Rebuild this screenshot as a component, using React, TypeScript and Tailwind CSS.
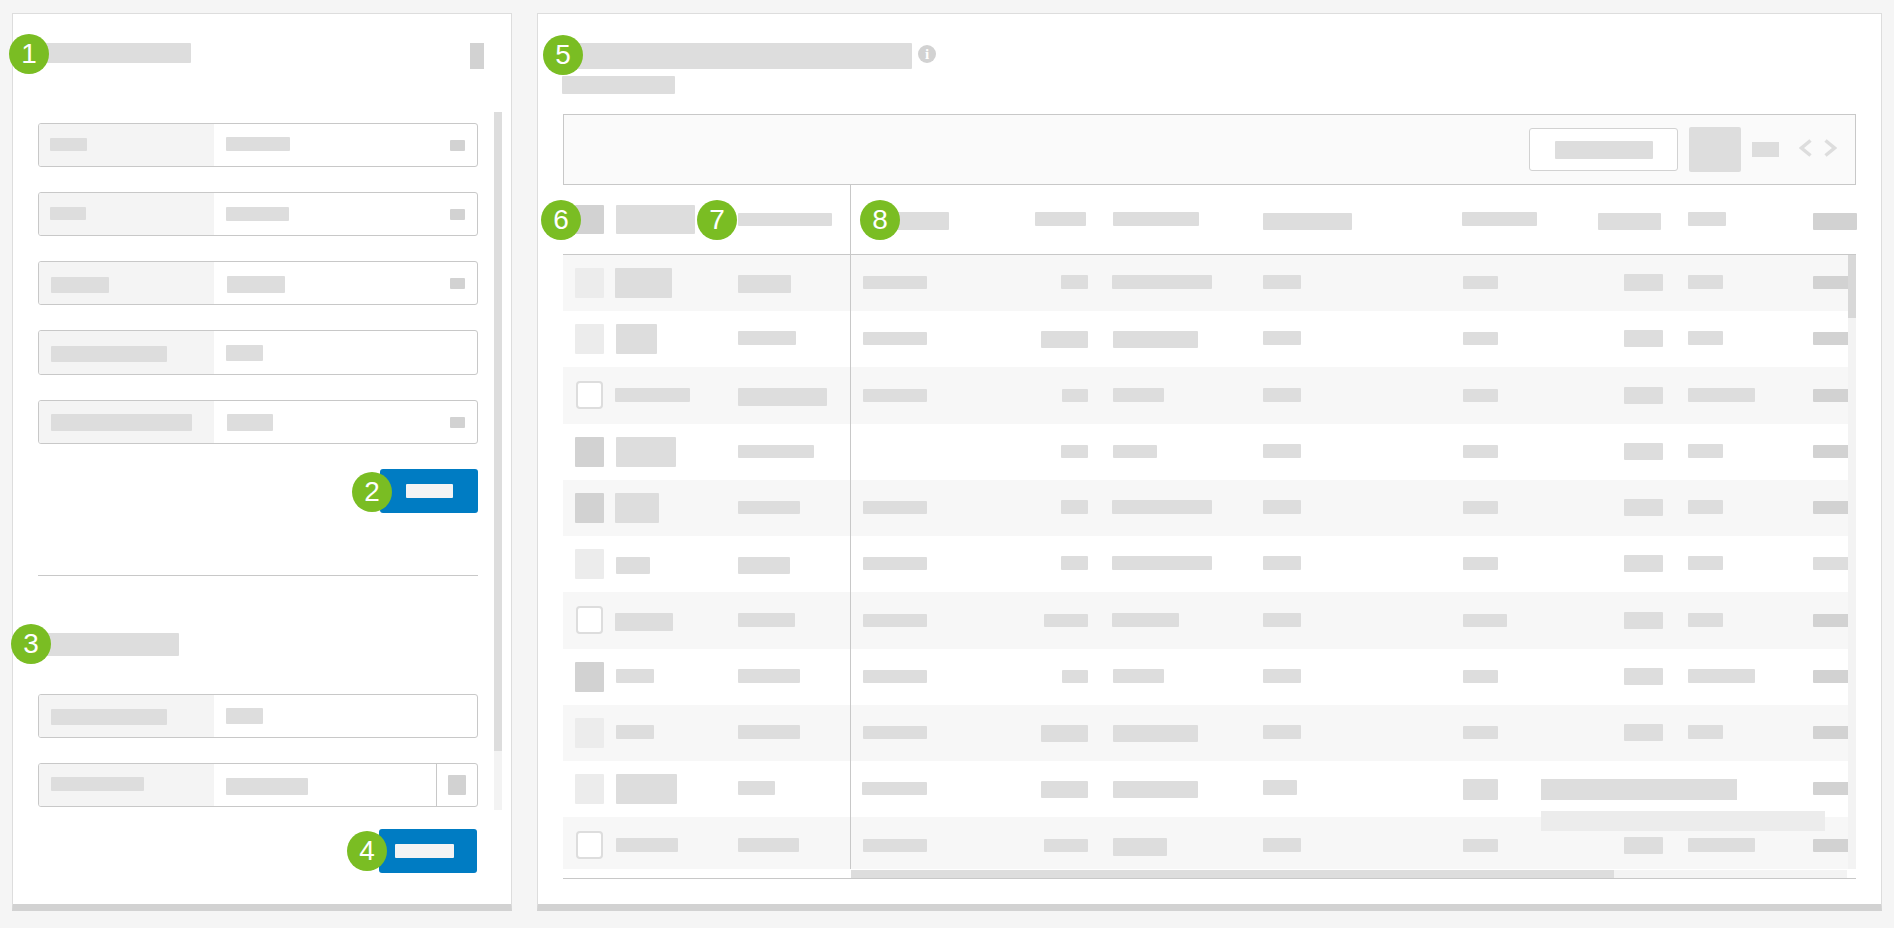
type BarSpec = [number, number, number, number] | null

function Bar({ l = 0, w, t = 0, h, c = "bg-[#ddd]" }: { l?: number; w: number; t?: number; h: number; c?: string }) {
  return <div className={`shrink-0 rounded-[1px] ${c}`} style={{ marginLeft: l, marginTop: t, width: w, height: h }} />
}

function Badge({ n, className }: { n: number; className: string }) {
  return (
    <div
      className={`absolute z-10 flex h-10 w-10 items-center justify-center rounded-full bg-[#7abd23] text-[28px] leading-none text-white ${className}`}
    >
      {n}
    </div>
  )
}

function Field({
  h = 44,
  label,
  value,
  small,
  select,
}: {
  h?: number
  label: [number, number, number, number]
  value: [number, number, number, number]
  small?: number
  select?: boolean
}) {
  return (
    <div className="flex overflow-hidden rounded-[3px] border border-[#c8c8c8] bg-white" style={{ height: h }}>
      <div className="flex w-[175px] items-start bg-[#f4f4f4]">
        <Bar l={label[0]} w={label[1]} t={label[2]} h={label[3]} />
      </div>
      <div className="flex flex-1 items-start justify-between">
        <Bar l={value[0]} w={value[1]} t={value[2]} h={value[3]} />
        {small !== undefined && (
          <div className="mr-3">
            <Bar w={15} t={small} h={11} c="bg-[#d2d2d2]" />
          </div>
        )}
      </div>
      {select && (
        <div className="flex w-[41px] items-start border-l border-[#c8c8c8]">
          <Bar l={11} w={18} t={11} h={20} c="bg-[#d2d2d2]" />
        </div>
      )}
    </div>
  )
}

function LeftPanel() {
  return (
    <div className="flex h-[898px] w-[500px] shrink-0 flex-col border border-b-[7px] border-[#ddd] border-b-[#d2d2d2] bg-white">
      <div className="flex items-start justify-between pt-[29px] pr-[27px] pl-[27px]">
        <div className="relative h-5 w-[151px] rounded-[1px] bg-[#ddd]">
          <Badge n={1} className="-top-[9px] -left-[31px]" />
        </div>
        <div className="h-[26px] w-[14px] bg-[#d2d2d2]" />
      </div>

      <div className="mt-[43px] flex h-[698px] pl-[25px]">
        <div className="w-[440px] pt-[11px]">
          <div className="flex flex-col gap-[25px]">
            <Field label={[11, 37, 14, 13]} value={[12, 64, 13, 14]} small={16} />
            <Field label={[11, 36, 14, 13]} value={[12, 63, 14, 14]} small={16} />
            <Field label={[12, 58, 15, 16]} value={[13, 58, 14, 17]} small={16} />
            <Field h={45} label={[12, 116, 15, 16]} value={[12, 37, 14, 16]} />
            <Field label={[12, 141, 13, 17]} value={[13, 46, 13, 17]} small={16} />
          </div>
          <div className="mt-[25px] flex justify-end">
            <div className="relative flex h-11 w-[98px] items-center justify-center rounded-[3px] bg-[#007cc3]">
              <Badge n={2} className="top-[3px] -left-[28px]" />
              <Bar w={47} h={14} c="bg-[#f4f4f4]" />
            </div>
          </div>
          <div className="mt-[62px] h-px bg-[#c8c8c8]" />
          <div className="relative mt-[57px] ml-[2px] h-[23px] w-[139px] rounded-[1px] bg-[#ddd]">
            <Badge n={3} className="-top-[9px] -left-[29px]" />
          </div>
          <div className="mt-[38px] flex flex-col gap-[25px]">
            <Field label={[12, 116, 14, 16]} value={[12, 37, 13, 16]} />
            <Field label={[12, 93, 13, 14]} value={[12, 82, 14, 17]} select />
          </div>
        </div>
        <div className="ml-4 flex h-full w-2 flex-col bg-[#f3f3f3]">
          <div className="h-[639px] bg-[#ddd]" />
        </div>
      </div>

      <div className="mt-[19px] mr-[34px] self-end">
        <div className="relative flex h-11 w-[98px] items-center rounded-[3px] bg-[#007cc3]">
          <Badge n={4} className="top-[2px] -left-[32px]" />
          <Bar l={16} w={59} h={14} c="bg-[#f4f4f4]" />
        </div>
      </div>
    </div>
  )
}

const gridCols = "grid grid-cols-[52px_123px_112px_1px_169px_68px_175px_200px_137px_63px_150px_36px]"

const rows: { h: number; check: "light" | "dark" | "white"; cells: BarSpec[] }[] = [
  {
    h: 56,
    check: "light",
    cells: [[0, 57, 13, 30], [0, 53, 20, 18], [12, 64, 21, 13], [0, 27, 20, 14], [24, 100, 20, 14], [0, 38, 20, 14], [0, 35, 21, 13], [0, 39, 19, 17], [25, 35, 20, 14], [0, 36, 21, 13]],
  },
  {
    h: 56,
    check: "light",
    cells: [[1, 41, 13, 30], [0, 58, 20, 14], [12, 64, 21, 13], [0, 47, 20, 17], [25, 85, 20, 17], [0, 38, 20, 14], [0, 35, 21, 13], [0, 39, 19, 17], [25, 35, 20, 14], [0, 36, 21, 13]],
  },
  {
    h: 57,
    check: "white",
    cells: [[0, 75, 21, 14], [0, 89, 21, 18], [12, 64, 22, 13], [0, 26, 22, 13], [25, 51, 21, 14], [0, 38, 21, 14], [0, 35, 22, 13], [0, 39, 20, 17], [25, 67, 21, 14], [0, 36, 22, 13]],
  },
  {
    h: 56,
    check: "dark",
    cells: [[1, 60, 13, 30], [0, 76, 21, 13], null, [0, 27, 21, 13], [25, 44, 21, 13], [0, 38, 20, 14], [0, 35, 21, 13], [0, 39, 19, 17], [25, 35, 20, 14], [0, 36, 21, 13]],
  },
  {
    h: 56,
    check: "dark",
    cells: [[0, 44, 13, 30], [0, 62, 21, 13], [12, 64, 21, 13], [0, 27, 20, 14], [24, 100, 20, 14], [0, 38, 20, 14], [0, 35, 21, 13], [0, 39, 19, 17], [25, 35, 20, 14], [0, 36, 21, 13]],
  },
  {
    h: 56,
    check: "light",
    cells: [[1, 34, 21, 17], [0, 52, 21, 17], [12, 64, 21, 13], [0, 27, 20, 14], [24, 100, 20, 14], [0, 38, 20, 14], [0, 35, 21, 13], [0, 39, 19, 17], [25, 35, 20, 14], [0, 36, 21, 13]],
  },
  {
    h: 57,
    check: "white",
    cells: [[0, 58, 21, 18], [0, 57, 21, 14], [12, 64, 22, 13], [0, 44, 22, 13], [24, 67, 21, 14], [0, 38, 21, 14], [0, 44, 22, 13], [0, 39, 20, 17], [25, 35, 21, 14], [0, 36, 22, 13]],
  },
  {
    h: 56,
    check: "dark",
    cells: [[1, 38, 20, 14], [0, 62, 20, 14], [12, 64, 21, 13], [0, 26, 21, 13], [25, 51, 20, 14], [0, 38, 20, 14], [0, 35, 21, 13], [0, 39, 19, 17], [25, 67, 20, 14], [0, 36, 21, 13]],
  },
  {
    h: 56,
    check: "light",
    cells: [[1, 38, 20, 14], [0, 62, 20, 14], [12, 64, 21, 13], [0, 47, 20, 17], [25, 85, 20, 17], [0, 38, 20, 14], [0, 35, 21, 13], [0, 39, 19, 17], [25, 35, 20, 14], [0, 36, 21, 13]],
  },
  {
    h: 56,
    check: "light",
    cells: [[1, 61, 13, 30], [0, 37, 20, 14], [11, 65, 21, 13], [0, 47, 20, 17], [25, 85, 20, 17], [0, 34, 19, 15], [0, 35, 18, 21], null, null, [0, 36, 21, 13]],
  },
  {
    h: 52,
    check: "white",
    cells: [[1, 62, 21, 14], [0, 61, 21, 14], [12, 64, 22, 13], [0, 44, 22, 13], [25, 54, 21, 18], [0, 38, 21, 14], [0, 35, 22, 13], [0, 39, 20, 17], [25, 67, 21, 14], [0, 36, 22, 13]],
  },
]

function Check({ kind }: { kind: "light" | "dark" | "white" }) {
  if (kind === "white") {
    return <div className="mt-[14px] ml-[13px] h-7 w-[27px] rounded-[4px] border-2 border-[#ddd] bg-white" />
  }
  return (
    <div className={`mt-[13px] ml-3 h-[30px] w-[29px] rounded-[1px] ${kind === "dark" ? "bg-[#d2d2d2]" : "bg-[#ececec]"}`} />
  )
}

function Cell({ bar, end, c }: { bar: BarSpec; end?: boolean; c?: string }) {
  return (
    <div className={`flex items-start ${end ? "justify-end" : ""}`}>
      {bar && <Bar l={bar[0]} w={bar[1]} t={bar[2]} h={bar[3]} c={c} />}
    </div>
  )
}

function Table() {
  return (
    <div>
      <div className={`${gridCols} h-[69px] w-[1293px]`}>
        <div className="relative flex items-start">
          <Badge n={6} className="top-[15px] -left-[22px]" />
          <Bar l={12} w={29} t={20} h={29} c="bg-[#d2d2d2]" />
        </div>
        <div className="relative flex items-start">
          <Bar l={1} w={79} t={20} h={29} />
          <Badge n={7} className="top-[15px] left-[82px]" />
        </div>
        <Cell bar={[0, 94, 28, 13]} />
        <div className="bg-[#c8c8c8]" />
        <div className="relative flex items-start">
          <Badge n={8} className="top-[15px] left-[9px]" />
          <Bar l={19} w={79} t={27} h={18} />
        </div>
        <Cell bar={[15, 51, 27, 14]} />
        <Cell bar={[25, 86, 27, 14]} />
        <Cell bar={[0, 89, 28, 17]} />
        <Cell bar={[-1, 75, 27, 14]} />
        <Cell bar={[-2, 63, 28, 17]} />
        <Cell bar={[25, 38, 27, 14]} />
        <Cell bar={[0, 44, 28, 17]} c="bg-[#d2d2d2]" />
      </div>
      <div className="h-px bg-[#c8c8c8]" />

      <div className="relative flex">
        <div className="w-[1285px]">
          {rows.map((row, i) => (
            <div key={i} className={`${gridCols} ${i % 2 === 0 ? "bg-[#f7f7f7]" : "bg-white"}`} style={{ height: row.h }}>
              <Check kind={row.check} />
              <Cell bar={row.cells[0]} />
              <Cell bar={row.cells[1]} />
              <div className="bg-[#c8c8c8]" />
              <Cell bar={row.cells[2]} />
              <Cell bar={row.cells[3]} end />
              <Cell bar={row.cells[4]} />
              <Cell bar={row.cells[5]} />
              <Cell bar={row.cells[6]} />
              <Cell bar={row.cells[7]} end />
              <Cell bar={row.cells[8]} />
              <Cell bar={row.cells[9]} c={i === 5 ? "bg-[#ddd]" : "bg-[#d2d2d2]"} />
            </div>
          ))}
        </div>
        <div className="flex w-2 flex-col bg-[#f3f3f3]">
          <div className="h-[63px] bg-[#d8d8d8]" />
        </div>
        {/* tooltip sitting over the last two rows */}
        <div className="absolute top-[524px] left-[978px] h-[21px] w-[196px] bg-[#ddd]" />
        <div className="absolute top-[556px] left-[978px] h-5 w-[284px] bg-[#ececec]" />
      </div>

      <div className="mt-px flex h-2">
        <div className="w-[288px]" />
        <div className="w-[763px] bg-[#ddd]" />
        <div className="w-[233px] bg-[#f3f3f3]" />
      </div>
      <div className="h-px bg-[#c8c8c8]" />
    </div>
  )
}

function RightPanel() {
  return (
    <div className="h-[898px] w-[1345px] shrink-0 border border-b-[7px] border-[#ddd] border-b-[#d2d2d2] bg-white px-[25px] pt-[29px]">
      <div className="-ml-px flex items-start">
        <div className="relative h-[26px] w-[350px] rounded-[1px] bg-[#ddd]">
          <Badge n={5} className="-top-2 -left-[19px]" />
        </div>
        <div className="mt-[2px] ml-[6px] flex h-[18px] w-[18px] items-center justify-center rounded-full bg-[#d2d2d2] font-['Liberation_Serif',serif] text-[15px] leading-none font-bold text-white">
          i
        </div>
      </div>
      <div className="mt-[7px] -ml-px h-[18px] w-[113px] rounded-[1px] bg-[#ddd]" />

      <div className="mt-5 flex h-[71px] items-center justify-end border border-[#c8c8c8] bg-[#fafafa] pr-[18px]">
        <div className="flex h-[43px] w-[149px] items-center justify-center rounded-[3px] border border-[#d2d2d2] bg-white">
          <Bar w={98} h={18} />
        </div>
        <div className="ml-[11px] h-[45px] w-[52px] rounded-[2px] bg-[#ddd]" />
        <div className="ml-[11px] h-[15px] w-[27px] bg-[#ddd]" />
        <svg className="mb-[3px] ml-5 h-[18px] w-[13px]" viewBox="0 0 13 18" fill="none" stroke="#ddd" strokeWidth="3.5">
          <polyline points="11.5,1.5 2.5,9 11.5,16.5" />
        </svg>
        <svg className="mb-[3px] ml-3 h-[18px] w-[13px]" viewBox="0 0 13 18" fill="none" stroke="#ddd" strokeWidth="3.5">
          <polyline points="1.5,1.5 10.5,9 1.5,16.5" />
        </svg>
      </div>

      <Table />
    </div>
  )
}

export default function App() {
  return (
    <div className="flex h-[928px] gap-[25px] overflow-hidden bg-[#f5f5f5] pt-[13px] pl-3 font-['Liberation_Sans',Arial,sans-serif]">
      <LeftPanel />
      <RightPanel />
    </div>
  )
}
